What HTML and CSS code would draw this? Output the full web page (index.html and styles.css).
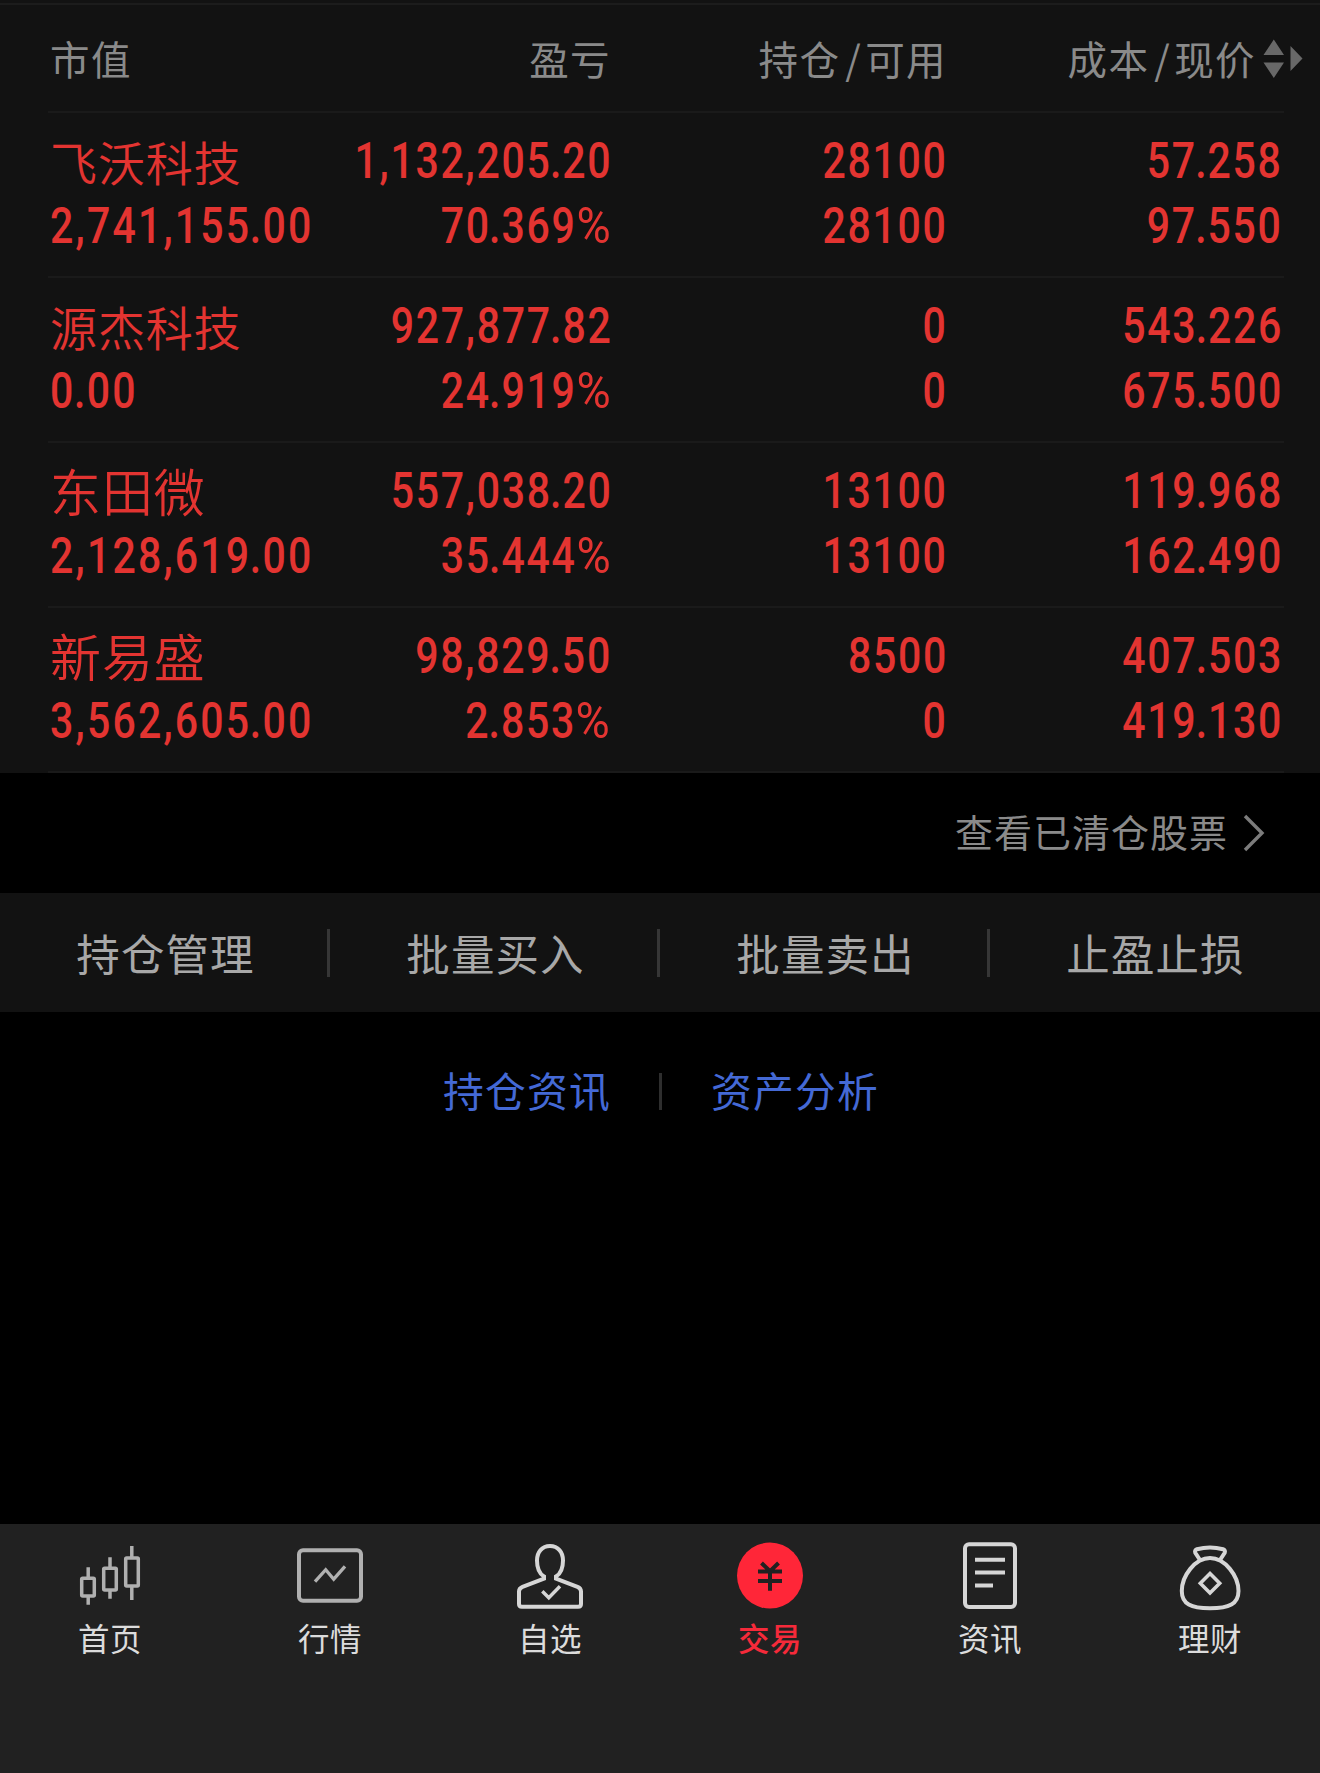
FILE: index.html
```html
<!DOCTYPE html>
<html lang="zh-CN">
<head>
    <meta charset="UTF-8">
    <meta name="viewport" content="width=device-width, initial-scale=1.0">
    <title>持仓</title>
    <link rel="stylesheet" href="styles.css">
</head>
<body>
    <div class="holdings">
        <div class="row head">
            <div class="cell left">市值</div>
            <div class="cell">盈亏</div>
            <div class="cell"><div>持仓<span class="slash">/</span>可用</div></div>
            <div class="cell sort"><div>成本<span class="slash">/</span>现价</div>
                <svg class="arrows" width="40" height="40" viewBox="0 0 40 40">
                    <path d="M0.5 16 L10.8 0.5 L21 16 Z M0.5 23.5 L10.8 39 L21 23.5 Z M27.5 7 L39.5 19.5 L27.5 32 Z"/>
                </svg>
            </div>
        </div>
        <div class="row">
            <div class="cell left"><div class="name">飞沃科技</div><div class="num">2,741,155<span class="dot">.</span>00</div></div>
            <div class="cell"><div class="num">1,132,205<span class="dot">.</span>20</div><div class="num">70<span class="dot">.</span>369<span class="pct">%</span></div></div>
            <div class="cell"><div class="num">28100</div><div class="num">28100</div></div>
            <div class="cell"><div class="num">57<span class="dot">.</span>258</div><div class="num">97<span class="dot">.</span>550</div></div>
        </div>
        <div class="row">
            <div class="cell left"><div class="name">源杰科技</div><div class="num">0<span class="dot">.</span>00</div></div>
            <div class="cell"><div class="num">927,877<span class="dot">.</span>82</div><div class="num">24<span class="dot">.</span>919<span class="pct">%</span></div></div>
            <div class="cell"><div class="num">0</div><div class="num">0</div></div>
            <div class="cell"><div class="num">543<span class="dot">.</span>226</div><div class="num">675<span class="dot">.</span>500</div></div>
        </div>
        <div class="row">
            <div class="cell left"><div class="name big">东田微</div><div class="num">2,128,619<span class="dot">.</span>00</div></div>
            <div class="cell"><div class="num">557,038<span class="dot">.</span>20</div><div class="num">35<span class="dot">.</span>444<span class="pct">%</span></div></div>
            <div class="cell"><div class="num">13100</div><div class="num">13100</div></div>
            <div class="cell"><div class="num">119<span class="dot">.</span>968</div><div class="num">162<span class="dot">.</span>490</div></div>
        </div>
        <div class="row">
            <div class="cell left"><div class="name big">新易盛</div><div class="num">3,562,605<span class="dot">.</span>00</div></div>
            <div class="cell"><div class="num">98,829<span class="dot">.</span>50</div><div class="num">2<span class="dot">.</span>853<span class="pct">%</span></div></div>
            <div class="cell"><div class="num">8500</div><div class="num">0</div></div>
            <div class="cell"><div class="num">407<span class="dot">.</span>503</div><div class="num">419<span class="dot">.</span>130</div></div>
        </div>
    </div>

    <div class="cleared">
        <span>查看已清仓股票</span>
        <svg width="22" height="38" viewBox="0 0 22 38">
            <path d="M2 2 L19 19 L2 36"/>
        </svg>
    </div>

    <div class="actions">
        <div class="action">持仓管理</div>
        <div class="action">批量买入</div>
        <div class="action">批量卖出</div>
        <div class="action">止盈止损</div>
    </div>

    <div class="links">
        <a>持仓资讯</a>
        <div class="divider"></div>
        <a>资产分析</a>
    </div>

    <div class="tabbar">
        <div class="tab">
            <svg class="icon dim" viewBox="0 0 72 72" stroke-width="3.5">
                <rect x="7.7" y="38.2" width="12.6" height="17.8" rx="1"/>
                <rect x="29.7" y="28.2" width="12.6" height="21.8" rx="1"/>
                <rect x="51.7" y="18" width="12.6" height="28" rx="1"/>
                <path d="M14.2 27.3 V38 M14.2 56 V64.7 M36 17.3 V28 M36 50 V58.7 M57.8 6 V18 M57.8 46 V60"/>
            </svg>
            <span>首页</span>
        </div>
        <div class="tab">
            <svg class="icon dim" viewBox="0 0 72 72" stroke-width="4">
                <rect x="5" y="10.3" width="62" height="50.4" rx="4"/>
                <path d="M21 41.6 L31.7 29.7 L39.7 39.2 L51 26.3" stroke-width="3.3"/>
            </svg>
            <span>行情</span>
        </div>
        <div class="tab">
            <svg class="icon" viewBox="0 0 72 72" stroke-width="4">
                <path d="M36 6 C28 6 23 12 23 20.5 C23 28 25 33.5 30 36.5 V38.6 L8.5 46.8 Q5 48.2 5 51.5 V64 Q5 66.8 7.8 66.8 H64.2 Q67 66.8 67 64 V51.5 Q67 48.2 63.5 46.8 L42 38.6 V36.5 C47 33.5 49 28 49 20.5 C49 12 44 6 36 6 Z"/>
                <path d="M28.3 51.3 L34.8 57.8 L46 46.3" stroke-width="3.4"/>
            </svg>
            <span>自选</span>
        </div>
        <div class="tab active">
            <svg class="icon" viewBox="0 0 72 72" stroke-width="4">
                <circle cx="36" cy="35.6" r="33"/>
                <path d="M27.5 23 L36 31.2 L44.5 23 M24 31.6 H48 M24 41 H48 M36 31 V50.8"/>
            </svg>
            <span>交易</span>
        </div>
        <div class="tab">
            <svg class="icon" viewBox="0 0 72 72" stroke-width="4">
                <rect x="11" y="4.3" width="50" height="62.7" rx="4"/>
                <path d="M21 19.7 H51 M21 32.4 H51 M21 45.4 H39"/>
            </svg>
            <span>资讯</span>
        </div>
        <div class="tab">
            <svg class="icon" viewBox="0 0 72 72" stroke-width="4">
                <path d="M26 20 L21.3 12.8 Q20.3 10.2 23 9.2 Q36 5.8 49 9.2 Q51.7 10.2 50.7 12.8 L46 20"/>
                <path d="M36 18 C21 18 7.8 36 7.8 51 C7.8 64 17 68.3 36 68.3 C55 68.3 64.5 64 64.5 51 C64.5 36 51 18 36 18 Z"/>
                <path d="M36 33.5 L45.7 43.3 L36 53 L26.3 43.3 Z" stroke-width="3.6"/>
            </svg>
            <span>理财</span>
        </div>
    </div>
</body>
</html>
```
FILE: styles.css
```css
* {
    box-sizing: border-box;
}
body {
    margin: 0;
    height: 1773px;
    display: flex;
    flex-direction: column;
    background-color: #000;
    color: #8a8a8a;
    font-family: "Noto Sans CJK SC", sans-serif;
    overflow: hidden;
}

/* holdings table */
.holdings {
    height: 773px;
    padding: 0 36px 0 48px;
    background-color: #121212;
    border-top: 3px solid #121212;
    box-shadow: inset 0 2px #1c1c1c;
}
.row {
    display: grid;
    grid-template-columns: 282px 281px 336px 335px;
    height: 165px;
    padding-top: 15px;
    border-bottom: 2px solid #1a1a1a;
    color: #e33431;
}
.cell {
    display: flex;
    flex-direction: column;
    align-items: flex-end;
    white-space: nowrap;
}
.cell.left {
    align-items: flex-start;
    padding-left: 2px;
}
.head {
    height: 110px;
    padding-top: 0;
    font-size: 39.5px;
    letter-spacing: 1.4px;
    line-height: 109px;
    color: #8a8a8a;
}
.cell.sort {
    flex-direction: row;
    align-items: flex-start;
    justify-content: flex-end;
    margin-right: -21px;
}
.slash {
    margin: 0 3px 0 5px;
}
.arrows {
    flex: none;
    margin: 36px 0 0 7px;
    fill: #686868;
}
.name {
    height: 65px;
    line-height: 65px;
    font-size: 47px;
    letter-spacing: 0.9px;
    font-weight: 350;
}
.name.big {
    font-size: 51px;
}
.num {
    height: 64.5px;
    line-height: 66px;
    margin-right: -1px;
    font-family: Roboto, sans-serif;
    font-size: 50px;
    font-weight: 550;
    letter-spacing: 2.1px;
    transform: scaleX(0.82);
    transform-origin: right center;
}
.left .num {
    letter-spacing: 2.7px;
    transform-origin: left center;
}
.dot {
    margin: 0 -1px 0 -2px;
}
.pct {
    display: inline-block;
    margin-left: 5px;
    font-weight: 400;
    transform: scaleX(1.14);
    transform-origin: right center;
}

.cleared {
    display: flex;
    align-items: center;
    justify-content: flex-end;
    gap: 15px;
    height: 120px;
    padding-right: 55px;
    font-size: 38px;
    letter-spacing: 1px;
}
.cleared span {
    margin-top: -5px;
}
.cleared svg {
    fill: none;
    stroke: #7c7c7c;
    stroke-width: 3.4;
}

/* batch actions */
.actions {
    display: flex;
    height: 119px;
    align-items: center;
    background-color: #121212;
}
.action {
    width: 330px;
    height: 48px;
    line-height: 47px;
    padding-left: 4px;
    border-right: 3px solid #363636;
    text-align: center;
    font-size: 43.5px;
    letter-spacing: 1.1px;
    color: #a8a8a8;
}
.action:last-child {
    border-right-color: transparent;
}

.links {
    display: flex;
    justify-content: center;
    align-items: center;
    height: 158px;
    padding-left: 2px;
    font-size: 40.8px;
    letter-spacing: 1.2px;
    color: #4469d5;
}
.links a {
    margin-top: -3px;
}
.divider {
    width: 3px;
    height: 37px;
    margin: 0 49px 0 48px;
    background-color: #2e2e2e;
}

/* bottom tab bar */
.tabbar {
    display: flex;
    height: 249px;
    margin-top: auto;
    padding-top: 16px;
    background-color: #212121;
}
.tab {
    display: flex;
    flex-direction: column;
    align-items: center;
    width: 220px;
    font-size: 31.5px;
    letter-spacing: 0.6px;
    line-height: 46px;
    color: #dcdcdc;
}
.icon {
    width: 72px;
    height: 72px;
    margin-bottom: 2px;
    fill: none;
    stroke: #d6d6d6;
}
.icon.dim {
    stroke: #b0b0b0;
}
.active {
    color: #f52a3a;
    font-weight: 500;
}
.active .icon {
    stroke: #212121;
}
.active circle {
    fill: #ff2638;
    stroke: none;
}
```
